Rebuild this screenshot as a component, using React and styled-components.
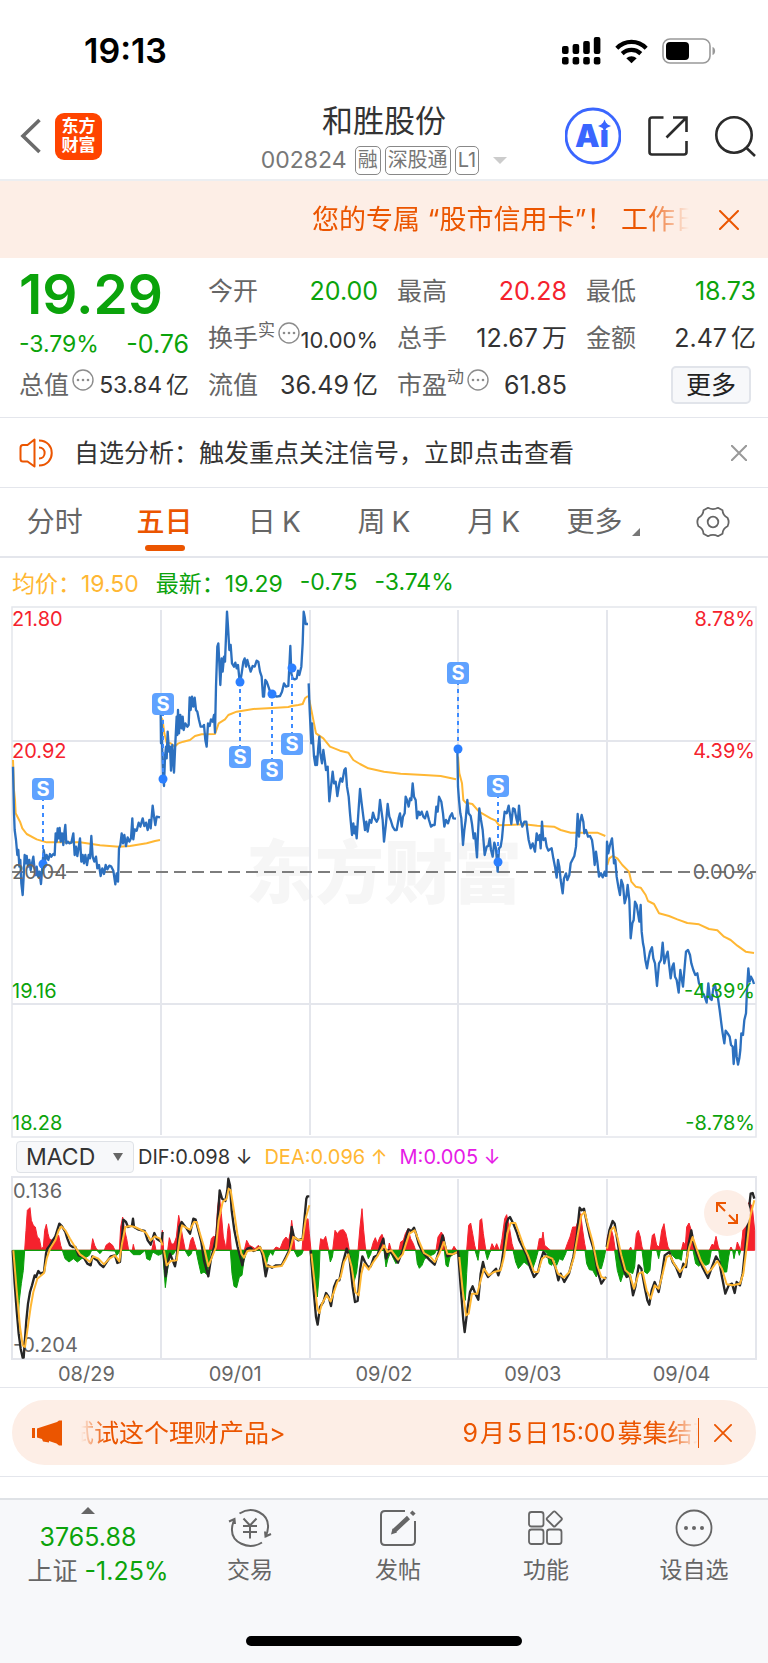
import React from "react";
import styled, { createGlobalStyle } from "styled-components";

const GREEN = "#0ba30b";
const RED = "#f5222d";
const ORANGE = "#eb5500";
const YELLOW = "#ffb733";
const PEACH = "#fdeee6";
const LINE = "#e4e6ec";

const GlobalStyle = createGlobalStyle`
  * {
    box-sizing: border-box;
  }
  body {
    margin: 0;
    background: #fff;
    color: #333;
    font-family: "Inter", "Noto Sans CJK SC", sans-serif;
  }
  button, select {
    font-family: inherit;
    padding: 0;
    border: none;
    background: none;
  }
  a {
    color: inherit;
    text-decoration: none;
  }
  svg {
    display: block;
    flex-shrink: 0;
  }
`;

/* ---------- status bar ---------- */

const StatusBar = styled.div`
  display: flex;
  align-items: center;
  justify-content: space-between;
  height: 102px;
  padding: 0 52px 0 84px;
`;

const Clock = styled.span`
  font-size: 34px;
  line-height: 40px;
  font-weight: 600;
  color: #000;
`;

const StatusIcons = styled.div`
  display: flex;
  align-items: center;
  gap: 14px;
`;

/* ---------- header ---------- */

const Header = styled.header`
  display: grid;
  grid-template-columns: 1fr auto 1fr;
  align-items: center;
  height: 79px;
  padding: 0 12px;
  border-bottom: 2px solid #eceef1;
`;

const HeaderSide = styled.div`
  display: flex;
  align-items: center;
  justify-content: ${(props) => props.$align || "flex-start"};
  gap: ${(props) => props.$gap}px;
  padding-bottom: 10px;
`;

const IconBtn = styled.button`
  display: flex;
  align-items: center;
  justify-content: center;
  cursor: pointer;
`;

const BackBtn = styled(IconBtn)`
  padding-left: 8px;
`;

const AppLogo = styled.a`
  display: flex;
  flex-direction: column;
  align-items: center;
  justify-content: center;
  width: 47px;
  height: 47px;
  border-radius: 9px;
  background: #ff4400;
  color: #fff;
  font-size: 17px;
  line-height: 19px;
  font-weight: 700;
`;

const StockTitle = styled.div`
  display: flex;
  flex-direction: column;
  align-items: center;
`;

const StockName = styled.h1`
  margin: 0;
  font-size: 31px;
  line-height: 38px;
  font-weight: 400;
`;

const StockMeta = styled.div`
  display: flex;
  align-items: center;
  gap: 4px;
  height: 40px;
  font-size: 23px;
  color: #777;
`;

const Code = styled.span`
  margin-right: 4px;
`;

const Tag = styled.span`
  height: 29px;
  padding: 0 2px;
  border: 1px solid #888;
  border-radius: 5px;
  font-size: 20px;
  line-height: 27px;
`;

const Caret = styled.i`
  margin-left: 10px;
  border: 7px solid transparent;
  border-top-color: #ccc;
  border-bottom: none;
`;

/* ---------- top banner ---------- */

const Banner = styled.div`
  display: flex;
  align-items: center;
  height: 77px;
  padding: 0 29px 0 312px;
  background: ${PEACH};
  color: ${ORANGE};
`;

const BannerText = styled.a`
  flex: 1;
  overflow: hidden;
  white-space: nowrap;
  font-size: 27px;
  line-height: 38px;
  mask-image: linear-gradient(to right, #000 88%, transparent 100%);
`;

const BannerClose = styled(IconBtn)`
  margin-left: 30px;
`;

/* ---------- quote ---------- */

const Quote = styled.section`
  display: grid;
  grid-template-columns: repeat(4, minmax(0, 1fr));
  grid-auto-rows: 47px;
  column-gap: 19px;
  padding: 9px 12px 9px 19px;
  border-bottom: 1px solid ${LINE};
`;

const Cell = styled.div`
  display: flex;
  align-items: center;
  justify-content: space-between;
  padding-top: ${(props) => (props.$low ? 12 : 0)}px;
  white-space: nowrap;
`;

const Label = styled.span`
  display: flex;
  align-items: center;
  font-size: 25px;
  line-height: 36px;
  color: #666;
`;

const Sup = styled.sup`
  align-self: flex-start;
  font-size: 17px;
  line-height: 20px;
`;

const InfoDot = styled.span`
  align-self: flex-start;
  margin: 2px 0 0 3px;
`;

const Value = styled.span`
  padding-top: ${(props) => (props.$size === 22 ? 4 : 0)}px;
  font-size: ${(props) => props.$size || 25}px;
  line-height: 36px;
  color: ${(props) => props.$color || "#333"};
`;

const Unit = styled.span`
  margin-left: 4px;
`;

const LastPrice = styled.strong`
  padding-top: 6px;
  font-size: 55px;
  line-height: 56px;
  font-weight: 600;
  color: ${GREEN};
`;

const MoreBtn = styled.button`
  width: 80px;
  height: 38px;
  margin: 0 5px 0 auto;
  border: 2px solid #e1e4ea;
  border-radius: 5px;
  background: #f7f8fa;
  font-size: 25px;
  line-height: 32px;
  color: #222;
`;

/* ---------- notice ---------- */

const Notice = styled.div`
  display: flex;
  align-items: center;
  height: 70px;
  padding: 0 21px 0 19px;
  border-bottom: 1px solid ${LINE};
`;

const NoticeText = styled.a`
  flex: 1;
  margin-left: 21px;
  font-size: 25px;
  line-height: 36px;
  color: #333;
`;

/* ---------- tabs ---------- */

const Tabs = styled.nav`
  display: grid;
  grid-template-columns: repeat(7, 1fr);
  height: 70px;
  border-bottom: 2px solid ${LINE};
`;

const Tab = styled.button`
  position: relative;
  display: flex;
  align-items: center;
  justify-content: center;
  gap: 6px;
  font-size: 28px;
  line-height: 40px;
  color: ${(props) => (props.$active ? ORANGE : "#666")};
  font-weight: ${(props) => (props.$active ? 500 : 400)};

  &::after {
    content: "";
    display: ${(props) => (props.$active ? "block" : "none")};
    position: absolute;
    left: 50%;
    bottom: 5px;
    width: 40px;
    height: 6px;
    margin-left: -20px;
    border-radius: 3px;
    background: ${ORANGE};
  }
`;

const Corner = styled.i`
  align-self: flex-end;
  margin: 0 0 20px 4px;
  border: 4px solid #777;
  border-left-color: transparent;
  border-top-color: transparent;
`;

/* ---------- charts ---------- */

const Legend = styled.div`
  display: flex;
  align-items: center;
  gap: 17px;
  height: 48px;
  padding: 0 12px;
  font-size: 23px;
`;

const LegendItem = styled.span`
  color: ${(props) => props.$color};
`;

const Plot = styled.svg`
  width: 100%;
  height: auto;
  font-family: inherit;
`;

const MacdBar = styled.div`
  display: flex;
  align-items: center;
  height: 38px;
  padding: 0 16px;
  font-size: 20px;
`;

const SelectWrap = styled.label`
  display: flex;
  align-items: center;
  width: 118px;
  height: 32px;
  margin-right: 4px;
  padding-right: 10px;
  border: 1px solid #dfe2e7;
  border-radius: 4px;
  background: #f7f8fa;
`;

const Select = styled.select`
  flex: 1;
  appearance: none;
  padding-left: 9px;
  outline: none;
  font-size: 23px;
  line-height: 28px;
  color: #333;
`;

const SelectArrow = styled.i`
  border: 5px solid transparent;
  border-top: 8px solid #666;
  border-bottom: none;
`;

const MacdItem = styled.span`
  margin-right: 12px;
  color: ${(props) => props.$color};
`;

const MacdPlot = styled.div`
  position: relative;
`;

const ExpandBtn = styled.button`
  position: absolute;
  top: 14px;
  right: 18px;
  display: flex;
  align-items: center;
  justify-content: center;
  width: 46px;
  height: 46px;
  border-radius: 50%;
  background: ${PEACH};
`;

const Dates = styled.div`
  display: grid;
  grid-template-columns: repeat(5, 1fr);
  height: 28px;
  padding: 0 12px;
  border-bottom: 1px solid ${LINE};
  font-size: 20px;
  line-height: 28px;
  text-align: center;
  color: #666;
`;

/* ---------- promo pill ---------- */

const PromoArea = styled.div`
  padding: 12px 12px 11px;
  border-bottom: 1px solid ${LINE};
`;

const Promo = styled.div`
  display: flex;
  align-items: center;
  height: 65px;
  padding: 0 24px 0 20px;
  border-radius: 33px;
  background: ${PEACH};
  color: ${ORANGE};
`;

const Marquee = styled.a`
  flex: 1;
  display: flex;
  gap: 175px;
  overflow: hidden;
  margin-left: 19px;
  white-space: nowrap;
  font-size: 25px;
  line-height: 36px;
  mask-image: linear-gradient(
    to right,
    transparent 0,
    #000 4%,
    #000 95%,
    transparent 100%
  );
`;

const MarqueeText = styled.span`
  &:first-child {
    margin-left: -12px;
  }
`;

const Num = styled.span`
  margin: 0 2px;
`;

const PromoDivider = styled.i`
  width: 1px;
  height: 30px;
  margin-right: 15px;
  background: ${ORANGE};
`;

/* ---------- bottom bar ---------- */

const BottomBar = styled.nav`
  display: grid;
  grid-template-columns: 176fr repeat(4, 148fr);
  height: 138px;
  margin-top: 21px;
  border-top: 2px solid #dfe2e6;
  background: #f7f8fa;
`;

const IndexCell = styled.a`
  display: flex;
  flex-direction: column;
  align-items: center;
  padding-top: 7px;
  font-size: 25px;
  line-height: 34px;
  color: ${GREEN};
  white-space: nowrap;
`;

const UpArrow = styled.i`
  margin-bottom: 6px;
  border: 7px solid transparent;
  border-top: none;
  border-bottom-color: #666;
`;

const IndexChange = styled.span`
  padding-left: 20px;
`;

const IndexName = styled.span`
  color: #666;
`;

const NavBtn = styled.button`
  display: flex;
  flex-direction: column;
  align-items: center;
  gap: 4px;
  padding-top: 8px;
  font-size: 23px;
  line-height: 36px;
  color: #666;
`;

const HomeArea = styled.div`
  display: flex;
  justify-content: center;
  height: 27px;
  background: #f7f8fa;
`;

const HomeIndicator = styled.div`
  width: 36%;
  height: 10px;
  border-radius: 5px;
  background: #000;
`;

/* ---------- icons ---------- */

const Cross = ({ size, color, width }) => (
  <svg width={size} height={size} viewBox="0 0 20 20" stroke={color} strokeWidth={width} strokeLinecap="round">
    <path d="M1 1L19 19M19 1L1 19" />
  </svg>
);

const Signal = () => (
  <svg width="39" height="28" viewBox="0 0 39 28">
    {[0, 1, 2, 3].map((i) => (
      <g key={i}>
        <rect x={i * 10.6} y={[9, 7, 4, 0][i]} width="6.6" height={[8, 10, 13, 17][i]} rx="2" />
        <rect x={i * 10.6} y="20" width="6.6" height="7.4" rx="2" />
      </g>
    ))}
  </svg>
);

const Wifi = () => (
  <svg width="33" height="25" viewBox="0 0 33 25" fill="none" stroke="#000" strokeWidth="4.2">
    <path d="M1.8 9.2C10 .8 23 .8 31.2 9.2" />
    <path d="M7.2 14.6C12.5 9.6 20.5 9.6 25.8 14.6" />
    <path d="M16.5 24.2L11.3 19.2C14.5 16.5 18.5 16.5 21.7 19.2Z" fill="#000" stroke="none" />
  </svg>
);

const Battery = () => (
  <svg width="54" height="26" viewBox="0 0 54 26">
    <rect x="1" y="1" width="47" height="24" rx="7" fill="none" stroke="#999" strokeWidth="1.6" />
    <rect x="4" y="4" width="23" height="18" rx="4" />
    <path d="M50.5 9V17C54 16 54 10 50.5 9Z" fill="#999" />
  </svg>
);

const Back = () => (
  <svg width="21" height="36" viewBox="0 0 21 36" fill="none" stroke="#6b6b6b" strokeWidth="3.6">
    <path d="M19.5 2L3 18L19.5 34" />
  </svg>
);

const AiIcon = () => (
  <svg width="56" height="58" viewBox="0 0 56 58" fill="#3a66ff">
    <circle cx="28" cy="29" r="27" fill="none" stroke="#3a66ff" strokeWidth="2.8" />
    <text x="10" y="40" fontSize="31" fontWeight="900">
      Ai
    </text>
    <path d="M39.5 12.500L41.500 17L46 19L41.500 21L39.500 25L37.500 21L33 19L37.500 17Z" />
  </svg>
);

const ShareIcon = () => (
  <svg width="40" height="40" viewBox="0 0 40 40" fill="none" stroke="#2b2b2b" strokeWidth="2.6">
    <path d="M15.5 1.5H4Q1.5 1.5 1.5 4V36Q1.5 38.5 4 38.5H36Q38.5 38.5 38.5 36V25" />
    <path d="M25 1.5H38.5V16M38 2L18.5 21.5" />
  </svg>
);

const SearchIcon = () => (
  <svg width="41" height="41" viewBox="0 0 41 41" fill="none" stroke="#2b2b2b" strokeWidth="2.6">
    <circle cx="19" cy="19" r="17.7" />
    <path d="M31 31.5L40 40" />
  </svg>
);

const Dots = () => (
  <svg width="22" height="22" viewBox="0 0 22 22">
    <circle cx="11" cy="11" r="10" fill="none" stroke="#8c8c8c" strokeWidth="1.4" />
    <g fill="#8c8c8c">
      <circle cx="6" cy="11" r="1.3" />
      <circle cx="11" cy="11" r="1.3" />
      <circle cx="16" cy="11" r="1.3" />
    </g>
  </svg>
);

const Speaker = () => (
  <svg width="34" height="30" viewBox="0 0 34 30" fill="none" stroke={ORANGE} strokeWidth="2">
    <path d="M15.5 1.5V28.5L8.5 23.5H4Q1.5 23.5 1.5 21V10Q1.5 7 4 7H8.5Z" strokeLinejoin="round" />
    <path d="M20 9.5C27.5 9.5 27.5 20.5 20 20.5M20 2.5C37 2.5 37 27.5 20 27.5" />
  </svg>
);

const Gear = () => (
  <svg width="34" height="32" viewBox="0 0 34 32" fill="none" stroke="#666" strokeWidth="1.8">
    <path
      d="M12 1.8Q17 4.5 22 1.8L26.5 4.3Q26.8 9.5 31.5 11.8Q33.8 16 31.5 20.2Q26.8 22.5 26.5 27.7L22 30.2Q17 27.5 12 30.2L7.5 27.7Q7.2 22.5 2.5 20.2Q.2 16 2.5 11.8Q7.2 9.5 7.5 4.3Z"
      strokeLinejoin="round"
    />
    <circle cx="17" cy="16" r="5.3" />
  </svg>
);

const Expand = () => (
  <svg width="24" height="24" viewBox="0 0 24 24" fill="none" stroke={ORANGE} strokeWidth="2">
    <path d="M2 11V2H11M2 2L10 10M22 13V22H13M22 22L14 14" />
  </svg>
);

const Horn = () => (
  <svg width="30" height="28" viewBox="0 0 30 28" fill={ORANGE}>
    <path d="M0 9H3V19H0ZM5 9.5L25 3L27 1.5H30V26.5H27L24.5 24.5L17 22V23.5L11 22.5L10 20L5 18.5Z" />
  </svg>
);

const TradeIcon = () => (
  <svg width="44" height="40" viewBox="0 0 44 40" fill="none" stroke="#666" strokeWidth="2">
    <path d="M11.5 5.5C25-3 41 6 40 19.5Q39.8 24 37.5 29M43 26L37.5 28.5L37 23.5" />
    <path d="M34 34.5C20 43 3 34 4 20.5Q4.2 16 6.5 11.5M1 13.5L6.5 11L7 16" />
    <path d="M15.5 10.5L22 17.5L28.5 10.5M15 18H29M15 24H29M22 17.5V30.5" />
  </svg>
);

const PostIcon = () => (
  <svg width="38" height="40" viewBox="0 0 38 40" fill="none" stroke="#666" strokeWidth="2">
    <path d="M26 3H6Q2 3 2 7V33Q2 37 6 37H32Q36 37 36 33V13" />
    <path d="M15 23L29.5 9.5M32.5 6.5L35 4" strokeWidth="4.500" />
    <path d="M12 26.5L13.5 20.500L18 24.500Z" fill="#666" stroke="none" />
  </svg>
);

const GridIcon = () => (
  <svg width="36" height="40" viewBox="0 0 36 40" fill="none" stroke="#666" strokeWidth="1.8">
    <rect x="1" y="4" width="14.500" height="14.500" rx="2.5" />
    <rect x="1" y="21.500" width="14.500" height="14.500" rx="2.5" />
    <rect x="19" y="21.500" width="14.500" height="14.500" rx="2.5" />
    <rect x="20.500" y="5.200" width="11.5" height="11.5" rx="1.5" transform="rotate(45 26.300 11)" />
  </svg>
);

const SetIcon = () => (
  <svg width="38" height="40" viewBox="0 0 38 40">
    <circle cx="19" cy="20" r="17.5" fill="none" stroke="#666" strokeWidth="1.8" />
    <g fill="#666">
      <circle cx="11" cy="20" r="2" />
      <circle cx="19" cy="20" r="2" />
      <circle cx="27" cy="20" r="2" />
    </g>
  </svg>
);

/* ---------- chart data, three plot units to a pixel ---------- */

const days = [
  {
    shift: 0,
    price:
      "39,500 42,640 44,690 48,720 52,765 55,750 58,800 61,780 64,850 68,885 71,830 74,765 77,790 80,768 84,800 88,780 92,810 96,790 100,770 103,800 107,825 110,800 114,830 118,815 123,852 127,800 131,750 136,780 140,765 145,780 150,762 154,770 160,762 164,765 167,700 170,725 173,685 176,715 179,684 182,725 186,700 190,735 193,698 196,675 199,730 204,725 208,730 214,728 220,700 224,765 228,740 232,768 236,742 240,715 244,785 248,765 252,790 256,765 261,795 266,765 270,775 274,708 278,770 283,785 288,770 292,805 297,795 302,828 307,805 312,822 317,795 322,808 328,797 334,800 340,812 346,853 350,820 354,845 357,745 361,735 365,700 369,730 373,705 378,738 383,712 388,725 393,715 397,655 400,718 404,688 410,692 416,668 421,680 428,655 433,678 438,668 443,690 448,660 452,685 458,617 462,650 466,675 470,650 480,652",
    avg: "39,480 42,570 45,600 47,640 60,665 67,685 80,702 110,718 140,727 190,727 240,727 300,736 357,740 390,738 440,730 465,723 480,720",
    dif: "38,360 44,460 50,540 56,610 62,655 68,682 71,682 74,640 79,570 84,520 90,485 96,465 104,435 108,440 115,422 122,430 132,425 138,370 142,355 150,345 158,330 166,318 178,280 186,288 196,305 202,325 210,345 218,350 226,350 236,375 250,380 262,400 272,405 277,378 284,385 292,390 300,402 310,410 320,395 332,378 345,375 352,398 360,395 366,320 370,268 378,275 384,290 396,285 399,265 402,290 416,298 434,302 443,330 452,343 463,308 470,325 485,335 488,305",
    dea: "40,360 50,480 60,590 68,645 75,650 82,600 92,530 100,485 112,445 132,428 140,385 150,355 166,330 176,300 184,288 196,300 210,325 222,345 240,372 258,385 270,395 280,378 295,385 312,402 328,385 345,375 358,393 366,340 376,290 390,287 405,290 420,297 438,307 452,330 465,318 480,325 488,345",
    up: "74,360 78,300 82,240 90,232 94,270 100,285 106,290 112,320 118,325 124,355 130,350 134,300 139,282 144,310 148,325 156,330 166,325 176,315 182,345 187,360 273,360 278,325 284,345 290,357 295,360 313,360 318,345 328,337 338,345 345,360 358,360 362,290 368,260 374,300 380,325 386,360 397,360 400,342 404,360 455,360 462,330 468,360 483,360 487,300 491,360",
    down: "38,360 42,420 48,500 54,565 58,510 64,460 70,420 74,360 187,360 195,385 207,395 220,385 232,395 245,385 260,380 268,375 275,360 290,360 300,370 308,360 345,362 350,375 355,370 360,360 388,360 400,373 420,373 436,360 440,385 450,390 458,365 475,375 486,370 490,360",
  },
  {
    shift: 0,
    price:
      "482,345 483,430 485,370 487,460 489,520 492,558 495,470 498,440 500,475 503,395 507,455 510,440 513,512 517,435 522,518 526,430 530,350 532,405 534,330 537,400 541,345 545,385 548,350 551,390 556,370 562,380 566,375 569,292 572,330 576,290 580,320 584,293 588,330 592,335 597,360 602,380 608,380 612,375 616,420 620,440 624,370 629,378 633,358 638,365 642,345 645,398 648,260 652,140 655,130 658,190 661,255 665,175 668,215 672,170 675,185 678,110 681,35 684,80 688,150 692,135 696,190 702,200 706,188 710,205 714,195 718,235 721,245 725,220 730,185 734,175 738,200 742,180 746,195 752,215 758,198 764,200 770,182 775,185 780,215 785,230 789,290 792,290 796,240 800,245 806,262 812,280 820,285 830,290 840,288 846,275 852,250 858,260 865,258 869,180 871,138 874,220 878,235 884,238 890,235 894,212 898,225 904,200 908,130 911,35 914,50 917,72 924,72",
    avg: "482,350 488,360 493,400 500,428 512,430 524,440 535,430 550,425 570,420 585,408 605,403 645,402 656,370 675,358 685,345 710,335 760,327 830,323 865,321 875,318 895,315 908,312 915,295 924,288",
    dif: "490,360 497,438 504,395 510,370 516,385 525,408 530,380 538,290 545,275 560,295 570,310 580,265 587,268 595,300 604,335 612,390 625,438 633,385 641,355 650,310 656,225 659,180 666,205 676,212 682,180 685,145 690,165 695,240 703,300 713,350 722,385 727,405 735,365 742,355 752,352 760,362 770,358 780,350 788,375 797,438 804,405 816,412 828,405 845,405 855,385 865,365 870,355 875,290 882,320 895,330 908,325 913,270 919,205 922,198 928,198",
    dea: "492,360 500,405 512,392 530,390 538,330 546,285 558,292 570,298 582,275 590,275 600,310 612,350 625,408 636,380 648,350 656,270 668,215 680,205 686,175 692,180 700,230 712,310 724,370 732,382 742,362 765,360 780,350 790,370 800,408 820,410 845,407 858,385 870,360 880,320 895,328 908,328 918,260 928,225",
    up: "503,360 508,322 514,340 520,342 524,335 529,320 536,255 541,280 548,320 556,360 566,360 572,330 578,320 584,340 590,360 628,360 634,325 640,318 647,320 653,230 658,195 664,250 670,320 676,345 679,355 683,300 686,280 690,300 694,360 733,360 740,330 748,345 758,350 765,355 775,345 785,360 820,360 828,350 840,355 850,330 858,320 866,330 872,300 875,270 880,310 885,360 906,360 910,310 918,270 924,265 928,310 933,360",
    down: "488,360 492,420 496,472 501,430 506,395 513,375 520,372 527,360 555,360 565,378 573,372 577,360 588,360 594,390 603,430 612,425 620,432 628,400 631,360 691,360 696,430 702,468 710,472 718,440 726,435 732,390 740,365 744,360 785,360 792,390 797,415 804,380 812,365 818,375 824,360 882,360 892,380 905,372 910,360",
  },
  {
    shift: 0,
    price:
      "926,250 929,330 931,370 934,430 936,370 939,420 942,470 946,495 948,470 951,495 955,440 958,410 961,460 966,490 970,450 974,478 978,510 983,500 988,604 993,560 998,515 1002,550 1007,545 1012,588 1018,550 1022,535 1027,545 1033,510 1037,505 1041,560 1046,590 1050,640 1056,705 1060,670 1063,700 1066,680 1070,715 1075,640 1080,567 1085,610 1090,650 1095,690 1099,665 1103,695 1109,660 1114,668 1119,638 1124,655 1130,665 1135,655 1140,600 1144,630 1148,660 1152,725 1158,670 1163,612 1168,650 1172,660 1178,680 1184,690 1190,690 1196,655 1200,640 1205,680 1209,650 1214,640 1217,590 1221,600 1226,620 1230,595 1234,600 1238,550 1242,590 1247,600 1251,655 1256,635 1260,645 1265,635 1270,650 1275,655 1281,635 1287,660 1293,680 1299,675 1304,675 1309,620 1313,635 1317,590 1324,605 1329,640 1333,680 1338,660 1344,670 1350,650 1356,640 1360,655 1368,656",
    avg: "928,300 938,350 948,400 970,415 990,440 1020,452 1045,458 1060,480 1080,492 1105,505 1152,515 1202,521 1272,525 1322,528 1347,533 1368,538",
    dif: "932,360 940,470 948,560 953,583 960,530 970,515 978,488 986,500 993,527 1002,470 1010,450 1018,450 1028,400 1040,355 1048,380 1058,470 1065,515 1073,512 1080,420 1087,378 1095,395 1104,410 1112,408 1122,380 1132,375 1142,345 1150,325 1158,385 1166,360 1176,370 1194,397 1208,360 1218,320 1225,297 1234,303 1242,292 1248,310 1256,340 1266,362 1276,375 1290,390 1304,403 1316,365 1328,315 1336,350 1342,378 1354,372 1374,365",
    dea: "934,370 944,460 952,535 958,548 966,520 980,495 992,513 1000,490 1012,455 1022,440 1032,395 1045,372 1055,410 1066,485 1076,495 1084,430 1092,400 1106,418 1120,395 1132,378 1152,345 1162,365 1174,360 1194,388 1208,372 1218,340 1228,310 1244,300 1256,330 1272,368 1292,380 1304,395 1318,370 1332,335 1342,370 1357,372 1372,365",
    up: "958,360 962,325 970,330 977,318 983,345 986,360 998,360 1005,300 1012,310 1020,300 1030,298 1038,310 1043,330 1048,360 1074,360 1080,290 1086,235 1091,300 1096,350 1098,360 1113,360 1120,335 1126,322 1132,340 1140,320 1146,312 1152,330 1154,360 1164,360 1168,338 1174,360 1197,360 1202,335 1210,330 1216,310 1224,295 1232,325 1240,340 1247,360 1308,360 1314,320 1324,305 1332,320 1336,360 1356,360 1362,348 1370,360",
    down: "930,360 937,440 945,475 952,500 957,440 960,360 985,360 991,395 997,380 1000,360 1046,360 1053,410 1062,455 1070,425 1075,380 1077,360 1098,360 1105,385 1112,372 1115,360 1152,360 1158,410 1164,385 1172,365 1178,380 1188,400 1196,390 1202,360 1247,360 1252,400 1258,414 1266,405 1274,385 1284,380 1294,375 1304,370 1309,360 1333,360 1338,405 1344,410 1350,380 1362,370 1374,360",
  },
  {
    shift: 1152,
    price:
      "220,448 222,560 225,600 229,640 232,655 237,735 241,690 245,660 250,600 254,640 260,648 264,672 269,715 273,700 279,772 282,700 286,625 291,660 296,690 302,765 308,740 313,738 317,715 321,750 326,770 331,728 336,745 341,815 345,745 350,740 354,715 358,670 362,635 368,640 374,617 379,650 382,672 387,625 392,628 397,655 401,672 405,617 409,660 415,680 421,665 427,665 430,690 434,720 440,745 446,730 453,755 458,700 462,720 467,705 470,745 474,665 478,720 484,715 488,740 493,752 498,748 503,745 508,775 513,800 518,833 522,780 526,800 530,840 536,880 540,835 546,820 550,840 556,825 560,790 566,778 571,768 576,740 581,642 585,710 588,668 593,645 598,665 601,700 606,690 612,710 618,708 624,720 628,750 632,795 636,755 640,785 645,830 651,820 656,832 662,815 666,830",
    avg: "222,470 226,520 234,550 238,600 245,608 265,612 285,635 320,655 335,662 345,676 375,675 420,673 460,677 510,680 530,690 560,698 590,698 640,698 664,708",
    dif: "222,360 230,470 238,570 242,605 250,540 258,485 266,468 274,490 283,508 290,430 297,395 304,425 312,440 324,428 336,415 343,435 352,405 360,350 367,280 373,265 378,260 388,280 398,305 406,330 416,350 428,375 438,410 450,440 462,425 470,390 478,365 490,380 503,385 514,410 523,450 530,430 541,455 555,430 568,380 578,320 584,260 587,232 593,240 600,235 608,275 618,320 630,360 640,420 652,460 660,448 666,440",
    dea: "226,380 236,480 246,555 254,550 264,490 280,490 290,450 300,415 314,435 330,425 350,420 360,380 370,310 380,278 394,278 404,305 418,345 432,375 450,425 462,425 474,385 486,377 505,385 522,430 540,442 556,425 570,380 582,310 592,255 602,245 612,285 626,335 640,405 652,440 666,445",
    up: "248,360 254,285 260,278 266,310 272,345 276,360 283,360 288,270 293,265 298,310 304,350 306,360 318,360 324,340 332,355 338,340 346,360 348,360 354,325 362,265 368,253 376,290 384,340 390,360 460,360 466,325 474,325 477,305 482,345 494,355 500,360 543,360 550,340 558,320 566,290 576,290 584,265 590,250 596,300 602,340 606,360",
    down: "222,360 228,430 236,490 244,510 248,430 252,360 273,360 282,390 286,360 303,360 310,388 318,365 322,360 387,360 395,395 403,415 412,405 420,395 432,405 446,415 455,390 463,360 478,360 490,370 495,400 503,405 511,385 518,405 526,385 536,390 545,370 548,360 603,360 608,400 616,418 626,420 637,440 645,415 652,415 660,385 665,360",
  },
  {
    shift: 1152,
    price:
      "667,830 669,725 673,760 678,735 684,715 688,760 690,790 694,780 698,830 703,860 708,885 712,840 717,855 722,910 727,890 731,855 736,900 740,1015 745,970 749,960 753,905 758,915 762,940 766,965 770,915 773,995 777,1030 780,1045 784,1080 789,1105 793,1080 798,1055 804,1042 808,1075 813,1090 819,1158 825,1090 831,1080 836,1028 841,1090 846,1070 851,1055 856,1100 860,1135 865,1100 869,1090 873,1130 878,1140 884,1178 889,1110 892,1130 897,1160 902,1100 906,1055 912,1050 918,1065 922,1090 928,1110 934,1125 940,1120 945,1150 950,1160 956,1180 962,1190 968,1208 973,1150 978,1195 983,1200 988,1165 993,1155 998,1180 1002,1195 1007,1230 1012,1270 1016,1300 1021,1330 1025,1292 1031,1300 1037,1310 1041,1335 1046,1340 1049,1392 1055,1320 1058,1370 1062,1394 1066,1375 1069,1350 1072,1300 1077,1305 1081,1260 1086,1240 1089,1170 1093,1105 1097,1145 1101,1130 1106,1140 1110,1152",
    avg: "670,795 676,775 686,768 700,775 715,795 735,815 742,845 755,860 770,863 785,885 792,903 810,912 825,940 855,948 880,958 910,969 945,973 975,987 1000,991 1020,1010 1040,1020 1060,1037 1085,1055 1110,1059",
    dif: "668,350 676,300 686,272 692,280 700,330 708,380 718,415 728,440 738,435 747,495 754,470 764,405 772,415 782,470 790,510 796,523 803,480 812,455 824,485 834,430 842,375 856,365 866,395 876,410 888,440 898,400 906,410 914,340 922,300 930,345 940,375 955,410 972,443 982,415 996,378 1006,395 1014,440 1024,490 1034,465 1044,460 1052,488 1058,455 1068,465 1076,430 1084,350 1092,260 1100,190 1106,188 1111,205",
    dea: "669,355 680,300 690,290 700,320 712,375 724,420 736,430 750,475 764,430 776,425 788,480 800,505 812,465 824,475 836,430 848,380 858,375 870,400 888,425 904,405 916,350 926,320 936,350 950,390 970,428 984,415 1000,392 1014,415 1028,462 1045,465 1068,460 1078,430 1088,350 1098,260 1111,210",
    up: "667,360 670,320 680,290 688,320 694,360 735,360 740,350 744,360 752,360 757,310 763,300 769,320 774,350 778,360 799,360 805,315 811,310 818,345 826,350 833,300 840,280 846,320 852,350 858,360 892,360 898,335 904,345 908,290 915,278 922,300 928,340 932,360 976,360 984,342 990,345 996,318 1003,350 1008,360 1036,360 1041,350 1046,360 1055,360 1060,335 1066,350 1070,360 1075,320 1080,260 1086,230 1096,215 1105,230 1112,300 1112,360",
    down: "692,360 700,420 710,455 718,430 728,440 738,425 746,430 752,410 756,360 774,360 782,425 790,430 798,420 803,360 818,360 824,385 829,360 857,360 865,375 875,385 885,385 892,390 896,360 927,360 935,400 945,408 955,395 965,405 975,400 982,360 1004,360 1012,410 1020,425 1028,425 1034,380 1038,360 1046,360 1050,385 1055,360 1062,360 1066,375 1070,360",
  },
];

/* x, centre of the badge, centre of the dot */
const signals = [
  [43, 183, 258],
  [163, 98, 173],
  [240, 151, 76],
  [272, 164, 88],
  [292, 138, 62],
  [458, 67, 143],
  [498, 180, 256],
];

const dayLines = [161, 310, 458, 607];

const scale = [
  { y: 20, left: "21.80", right: "8.78%", color: RED },
  { y: 152, left: "20.92", right: "4.39%", color: RED },
  { y: 273, left: "20.04", right: "0.00%", color: "#666" },
  { y: 392, left: "19.16", right: "-4.39%", color: GREEN },
  { y: 524, left: "18.28", right: "-8.78%", color: GREEN },
];

const PriceChart = () => (
  <Plot viewBox="0 0 768 532" role="img" aria-label="五日">
    <text x="384" y="292" textAnchor="middle" fontSize="69" fontWeight="900" fill="#f6f6f6">
      东方财富
    </text>
    <g fill="none" stroke={LINE} strokeWidth="2">
      <rect x="12" y="1" width="744" height="530" strokeWidth="1.5" />
      {dayLines.map((x) => (
        <path key={x} d={`M${x} 4V529`} />
      ))}
      <path d="M12 135H756M12 398H756" />
    </g>
    <path d="M12 266H756" stroke="#7d7d7d" strokeWidth="2" strokeDasharray="12 6" />
    <svg x="0" y="0" width="768" height="532" viewBox="0 18 2304 1596">
      {days.map((day, i) => (
        <g key={i} transform={`translate(${day.shift})`} fill="none" strokeLinejoin="round">
          <polyline points={day.avg} stroke={YELLOW} strokeWidth="6" />
          <polyline points={day.price} stroke="#2c70bf" strokeWidth="7" />
        </g>
      ))}
    </svg>
    {signals.map(([x, y, dot]) => (
      <g key={x}>
        <path d={`M${x} ${y}V${dot}`} stroke="#3d8bff" strokeWidth="2" strokeDasharray="4 4" />
        <circle cx={x} cy={dot} r="4.5" fill="#2b7fff" />
        <rect x={x - 11} y={y - 11} width="22" height="22" rx="4" fill="#5fa2ff" />
        <text x={x} y={y + 7} textAnchor="middle" fontSize="20" fontWeight="700" fill="#fff">
          S
        </text>
      </g>
    ))}
    {scale.map((row) => (
      <g key={row.y} fill={row.color} fontSize="20">
        <text x="12" y={row.y}>{row.left}</text>
        <text x="755" y={row.y} textAnchor="end">{row.right}</text>
      </g>
    ))}
  </Plot>
);

const MacdChart = () => (
  <Plot viewBox="0 0 768 184" role="img" aria-label="MACD">
    <g fill="none" stroke={LINE} strokeWidth="2">
      <rect x="12" y="1" width="744" height="182" />
      {dayLines.map((x) => (
        <path key={x} d={`M${x} 3V182`} />
      ))}
    </g>
    <g fill="#666" fontSize="20">
      <text x="13" y="22">0.136</text>
      <text x="13" y="176">-0.204</text>
    </g>
    <svg x="0" y="0" width="768" height="184" viewBox="0 137 2304 552">
      {days.map((day, i) => (
        <g key={i} transform={`translate(${day.shift})`} strokeWidth="3">
          <polygon points={day.up} fill={RED} stroke={RED} />
          <polygon points={day.down} fill="#0a9e0a" stroke="#0a9e0a" />
        </g>
      ))}
      {days.map((day, i) => (
        <g key={i} transform={`translate(${day.shift})`} fill="none" strokeLinejoin="round">
          <polyline points={day.dif} stroke="#262626" strokeWidth="7" />
          <polyline points={day.dea} stroke={YELLOW} strokeWidth="6" />
        </g>
      ))}
    </svg>
  </Plot>
);

const tabs = [
  { name: "分时" },
  { name: "五日", active: true },
  { name: "日", period: "K" },
  { name: "周", period: "K" },
  { name: "月", period: "K" },
  { name: "更多", more: true },
];
const dates = ["08/29", "09/01", "09/02", "09/03", "09/04"];

const App = () => {
  return (
    <>
      <GlobalStyle />
      <StatusBar>
        <Clock>19:13</Clock>
        <StatusIcons>
          <Signal />
          <Wifi />
          <Battery />
        </StatusIcons>
      </StatusBar>

      <Header>
        <HeaderSide $gap={14}>
          <BackBtn aria-label="返回">
            <Back />
          </BackBtn>
          <AppLogo href="#">
            <span>东方</span>
            <span>财富</span>
          </AppLogo>
        </HeaderSide>
        <StockTitle>
          <StockName>和胜股份</StockName>
          <StockMeta>
            <Code>002824</Code>
            <Tag>融</Tag>
            <Tag>深股通</Tag>
            <Tag>L1</Tag>
            <Caret />
          </StockMeta>
        </StockTitle>
        <HeaderSide $align="flex-end" $gap={27}>
          <IconBtn aria-label="Ai">
            <AiIcon />
          </IconBtn>
          <IconBtn aria-label="分享">
            <ShareIcon />
          </IconBtn>
          <IconBtn aria-label="搜索">
            <SearchIcon />
          </IconBtn>
        </HeaderSide>
      </Header>

      <Banner>
        <BannerText href="#">您的专属 “股市信用卡”！ 工作日</BannerText>
        <BannerClose aria-label="关闭">
          <Cross size={20} color={ORANGE} width={2} />
        </BannerClose>
      </Banner>

      <Quote>
        <Cell>
          <LastPrice>19.29</LastPrice>
        </Cell>
        <Cell>
          <Label>今开</Label>
          <Value $color={GREEN}>20.00</Value>
        </Cell>
        <Cell>
          <Label>最高</Label>
          <Value $color={RED}>20.28</Value>
        </Cell>
        <Cell>
          <Label>最低</Label>
          <Value $color={GREEN}>18.73</Value>
        </Cell>
        <Cell $low>
          <Value $size={23} $color={GREEN}>-3.79%</Value>
          <Value $color={GREEN}>-0.76</Value>
        </Cell>
        <Cell>
          <Label>
            换手<Sup>实</Sup>
            <InfoDot><Dots /></InfoDot>
          </Label>
          <Value $size={22}>10.00%</Value>
        </Cell>
        <Cell>
          <Label>总手</Label>
          <Value>12.67<Unit>万</Unit></Value>
        </Cell>
        <Cell>
          <Label>金额</Label>
          <Value>2.47<Unit>亿</Unit></Value>
        </Cell>
        <Cell>
          <Label>
            总值<InfoDot><Dots /></InfoDot>
          </Label>
          <Value $size={23}>53.84<Unit>亿</Unit></Value>
        </Cell>
        <Cell>
          <Label>流值</Label>
          <Value>36.49<Unit>亿</Unit></Value>
        </Cell>
        <Cell>
          <Label>
            市盈<Sup>动</Sup>
            <InfoDot><Dots /></InfoDot>
          </Label>
          <Value>61.85</Value>
        </Cell>
        <Cell>
          <MoreBtn>更多</MoreBtn>
        </Cell>
      </Quote>

      <Notice>
        <Speaker />
        <NoticeText href="#">自选分析：触发重点关注信号，立即点击查看</NoticeText>
        <IconBtn aria-label="关闭">
          <Cross size={16} color="#999" width={2.5} />
        </IconBtn>
      </Notice>

      <Tabs>
        {tabs.map((tab) => (
          <Tab key={tab.name} $active={tab.active}>
            <span>{tab.name}</span>
            {tab.period && <span>{tab.period}</span>}
            {tab.more && <Corner />}
          </Tab>
        ))}
        <Tab aria-label="设置">
          <Gear />
        </Tab>
      </Tabs>

      <Legend>
        <LegendItem $color={YELLOW}>均价：19.50</LegendItem>
        <LegendItem $color={GREEN}>最新：19.29</LegendItem>
        <LegendItem $color={GREEN}>-0.75</LegendItem>
        <LegendItem $color={GREEN}>-3.74%</LegendItem>
      </Legend>
      <PriceChart />

      <MacdBar>
        <SelectWrap>
          <Select aria-label="指标" defaultValue="MACD">
            <option>MACD</option>
          </Select>
          <SelectArrow />
        </SelectWrap>
        <MacdItem $color="#333">DIF:0.098 ↓</MacdItem>
        <MacdItem $color={YELLOW}>DEA:0.096 ↑</MacdItem>
        <MacdItem $color="#e61ae6">M:0.005 ↓</MacdItem>
      </MacdBar>
      <MacdPlot>
        <MacdChart />
        <ExpandBtn aria-label="全屏">
          <Expand />
        </ExpandBtn>
      </MacdPlot>
      <Dates>
        {dates.map((date) => (
          <span key={date}>{date}</span>
        ))}
      </Dates>

      <PromoArea>
        <Promo>
          <Horn />
          <Marquee href="#">
            <MarqueeText>试试这个理财产品&gt;</MarqueeText>
            <MarqueeText>
              <Num>9</Num>月<Num>5</Num>日<Num>15:00</Num>募集结束
            </MarqueeText>
          </Marquee>
          <PromoDivider />
          <IconBtn aria-label="关闭">
            <Cross size={18} color={ORANGE} width={2} />
          </IconBtn>
        </Promo>
      </PromoArea>

      <BottomBar>
        <IndexCell href="#">
          <UpArrow />
          <span>3765.88</span>
          <IndexChange>
            <IndexName>上证</IndexName> -1.25%
          </IndexChange>
        </IndexCell>
        <NavBtn>
          <TradeIcon />
          交易
        </NavBtn>
        <NavBtn>
          <PostIcon />
          发帖
        </NavBtn>
        <NavBtn>
          <GridIcon />
          功能
        </NavBtn>
        <NavBtn>
          <SetIcon />
          设自选
        </NavBtn>
      </BottomBar>
      <HomeArea>
        <HomeIndicator />
      </HomeArea>
    </>
  );
};

export default App;
